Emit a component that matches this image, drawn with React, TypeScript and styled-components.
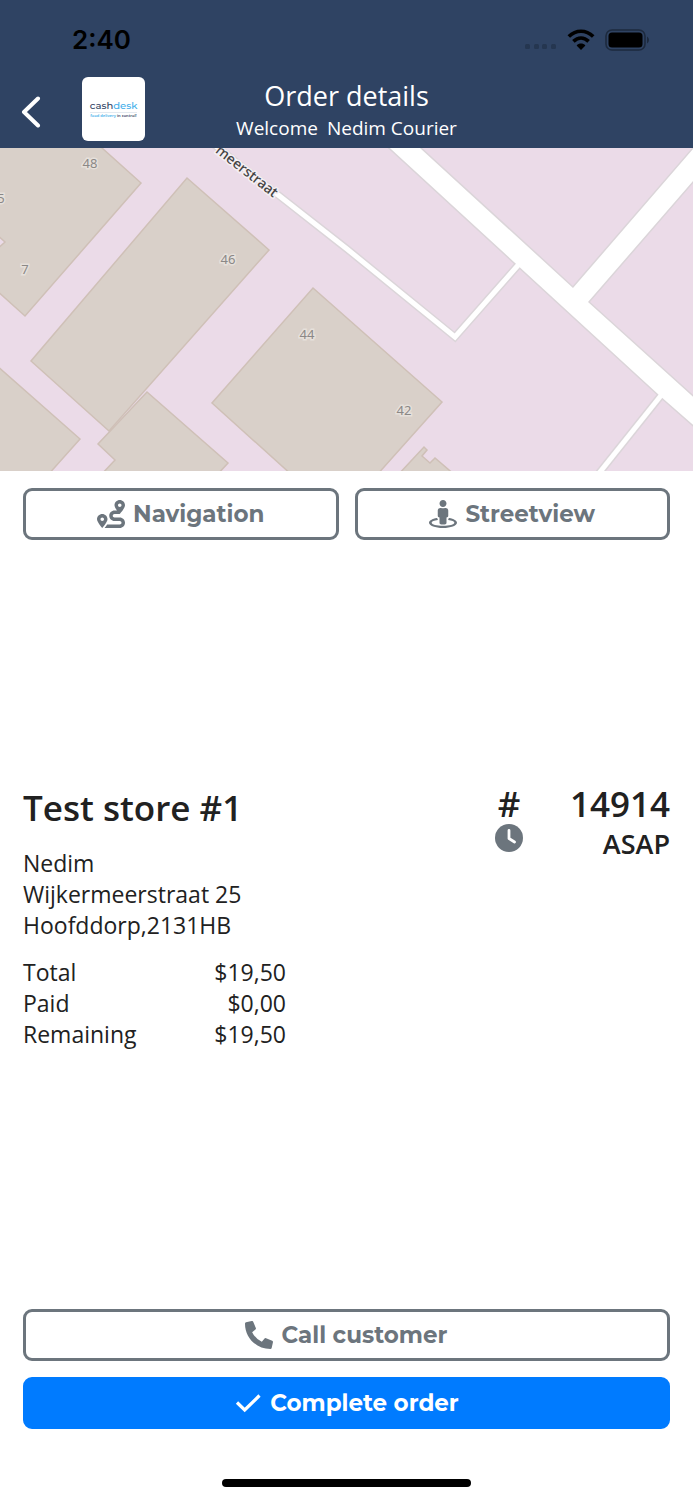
import React from "react";
import styled, { createGlobalStyle } from "styled-components";
import { FaPhoneAlt, FaRoute, FaStreetView } from "react-icons/fa";

const color = {
  navy: "#2f4363",
  gray: "#6c757d",
  blue: "#007bff",
  ink: "#212121",
  land: "#ebdbe8",
  building: "#d9d0c9",
  wall: "#cfc0b7",
  casing: "#dbd5d9",
};

const textFont = `"Open Sans", "Noto Sans", sans-serif`;
const uiFont = `Montserrat, Inter, sans-serif`;

const GlobalStyle = createGlobalStyle`
  *, *::before, *::after { box-sizing: border-box; }
  body {
    margin: 0;
    background: #fff;
    color: ${color.ink};
    font-family: ${textFont};
  }
`;

const Screen = styled.div`
  display: flex;
  flex-direction: column;
  min-height: 100vh;
`;

const Header = styled.header`
  background: ${color.navy};
  color: #fff;
`;

const StatusBar = styled.div`
  display: flex;
  align-items: center;
  justify-content: space-between;
  height: 76px;
  padding: 4px 43px 0 72px;
  color: #000;
`;

const Time = styled.span`
  font: 600 26px/32px Inter, sans-serif;
`;

const StatusIcons = styled.div`
  display: flex;
  align-items: center;
  gap: 10px;
`;

const TitleBar = styled.div`
  display: grid;
  grid-template-columns: 1fr auto 1fr;
  align-items: center;
  height: 72px;
  padding: 0 20px;
`;

const Leading = styled.div`
  display: flex;
  align-items: center;
  gap: 40px;
`;

const BackButton = styled.button`
  display: flex;
  padding: 0;
  border: 0;
  background: none;
  color: inherit;
  cursor: pointer;
`;

const Logo = styled.div`
  display: flex;
  flex-direction: column;
  align-items: center;
  justify-content: center;
  width: 63px;
  height: 64px;
  margin-bottom: 6px;
  border-radius: 6px;
  background: #fff;
`;

const LogoName = styled.span`
  border-bottom: 1px solid #e4eaf0;
  color: ${color.navy};
  font: 500 10px/13px ${uiFont};
`;

const LogoTagline = styled.span`
  color: ${color.navy};
  font: 600 4px/6px "Noto Sans", sans-serif;
  white-space: nowrap;
`;

const Accent = styled.span`
  color: #41aeea;
`;

const Heading = styled.div`
  padding-bottom: 4px;
  text-align: center;
`;

const Title = styled.h1`
  margin: 0;
  font-size: 27px;
  font-weight: 400;
  line-height: 36px;
`;

const Welcome = styled.p`
  display: flex;
  justify-content: center;
  gap: 9px;
  margin: 0;
  font-size: 19px;
  line-height: 28px;
`;

const Map = styled.svg`
  display: block;
  width: 100%;
  height: 323px;
  background: ${color.land};
`;

const HouseNumber = styled.text`
  fill: #8b8886;
  stroke: #e6e0db;
  stroke-width: 3px;
  paint-order: stroke;
  font: 400 13px "Noto Sans", sans-serif;
  text-anchor: middle;
`;

const StreetName = styled.text`
  fill: #444;
  stroke: #f4eef2;
  stroke-width: 3px;
  paint-order: stroke;
  font: 500 14px "Noto Sans", sans-serif;
  text-anchor: middle;
`;

const Actions = styled.div<{ $columns: number }>`
  display: grid;
  grid-template-columns: repeat(${(p) => p.$columns}, 1fr);
  gap: 16px;
  padding: 17px 23px 15px;
`;

const Button = styled.button<{ $primary?: boolean }>`
  display: flex;
  align-items: center;
  justify-content: center;
  gap: 8px;
  height: 52px;
  padding: 0;
  border: 3px solid ${(p) => (p.$primary ? color.blue : color.gray)};
  border-radius: 9px;
  background: ${(p) => (p.$primary ? color.blue : "#fff")};
  color: ${(p) => (p.$primary ? "#fff" : color.gray)};
  font: 700 23px/28px ${uiFont};
  cursor: pointer;
`;

const Details = styled.main`
  display: flex;
  flex: 1;
  align-items: center;
  padding: 0 23px 14px;
`;

const DetailsRow = styled.div`
  display: flex;
  align-items: flex-start;
  justify-content: space-between;
  width: 100%;
`;

const Store = styled.section`
  flex: 0 0 263px;
`;

const StoreName = styled.h2`
  margin: 0 0 16px;
  font-size: 35px;
  font-weight: 600;
  line-height: 48px;
  white-space: nowrap;
`;

const Address = styled.address`
  margin-bottom: 16px;
  font-size: 23px;
  font-style: normal;
  line-height: 31px;
`;

const Totals = styled.table`
  width: 100%;
  border-collapse: collapse;
  font-size: 23px;
  line-height: 31px;

  th, td { padding: 0; font-weight: 400; }
  th { text-align: left; }
  td { text-align: right; }
`;

const Ticket = styled.section`
  display: grid;
  grid-template-columns: 28px 1fr;
  column-gap: 47px;
  justify-items: end;
`;

const TicketNumber = styled.span`
  justify-self: end;
  font-size: 35px;
  font-weight: 600;
  line-height: 40px;
`;

const Hash = styled(TicketNumber)`
  justify-self: center;
`;

const DueTime = styled.span`
  font-size: 27px;
  font-weight: 600;
  line-height: 40px;
`;

const HomeArea = styled.footer`
  display: flex;
  align-items: flex-end;
  justify-content: center;
  height: 56px;
  padding-bottom: 13px;
`;

const HomeIndicator = styled.span`
  width: 36%;
  height: 8px;
  border-radius: 4px;
  background: #000;
`;

const buildings = [
  "M-4-90L102 0L141 35L25 168L-4 142V102L5 94L-4 86Z",
  "M187 30L269 102L109 283L31 213Z",
  "M147 244L228 315L216 328H100L115 312L98 296Z",
  "M-4 217L80 291L47 328H-4Z",
  "M313 140L442 254L376 328H293L212 255Z",
  "M397 328L424 299L427 302L422 308L430 315L435 310L456 328Z",
];

const mainRoads =
  "M379-10L659 247L700 283V255L588 154L700 25V-7L573 140L409-10Z";
const paths = ["M212-5L347 101L455 189L520 115", "M663 245L596 329"];

const houseNumbers: [string, number, number][] = [
  ["48", 90, 20],
  ["5", 1, 55],
  ["7", 25, 126],
  ["46", 228, 116],
  ["44", 307, 191],
  ["42", 404, 267],
];

const StreetMap = () => (
  <Map viewBox="0 0 693 323" preserveAspectRatio="xMidYMid slice" role="img" aria-label="Map of the delivery address">
    <g fill={color.building} stroke={color.wall} strokeWidth="1.5">
      {buildings.map((d) => <path key={d} d={d} />)}
    </g>
    <g fill="none" stroke={color.casing}>
      <path d={mainRoads} strokeWidth="3" />
      {paths.map((d) => <path key={d} d={d} strokeWidth="8" />)}
    </g>
    <path d={mainRoads} fill="#fff" />
    <g fill="none" stroke="#fff" strokeWidth="5">
      {paths.map((d) => <path key={d} d={d} />)}
    </g>
    {houseNumbers.map(([label, x, y]) => (
      <HouseNumber key={label} x={x} y={y}>{label}</HouseNumber>
    ))}
    <StreetName transform="translate(244 27) rotate(38)">meerstraat</StreetName>
  </Map>
);

const SignalIcon = () => (
  <svg width="32" height="22" viewBox="0 0 32 22" fill="#253650" aria-hidden="true">
    {[0, 9, 17, 26].map((x) => <rect key={x} x={x} y="15" width="5" height="5" rx="1.5" />)}
  </svg>
);

const WifiIcon = () => (
  <svg width="28" height="22" viewBox="0 0 28 22" aria-hidden="true">
    <g fill="none" stroke="#000" strokeWidth="3.6">
      <path d="M1.8 7.6C9 .4 19 .4 26.2 7.6" />
      <path d="M6.4 12.4C11 8 17 8 21.6 12.4" />
    </g>
    <path d="M9.6 16.4C12 14 16 14 18.4 16.4L14 21Z" />
  </svg>
);

const BatteryIcon = () => (
  <svg width="45" height="22" viewBox="0 0 45 22" aria-hidden="true">
    <rect x="1" y="1" width="39" height="20" rx="6" fill="none" stroke="#1d2a3e" strokeWidth="1.6" />
    <rect x="3.5" y="3.5" width="34" height="15" rx="3.5" />
    <path d="M42 7.5C44.6 9 44.6 13 42 14.5Z" fill="#1d2a3e" />
  </svg>
);

const ChevronIcon = () => (
  <svg width="22" height="32" viewBox="0 0 22 32" fill="none" stroke="currentColor" strokeWidth="4" strokeLinecap="round" strokeLinejoin="round" aria-hidden="true">
    <path d="M18 2.5L4 16L18 29.5" />
  </svg>
);

const CheckIcon = () => (
  <svg width="28" height="28" viewBox="0 0 28 28" fill="none" stroke="currentColor" strokeWidth="3.2" aria-hidden="true">
    <path d="M3 13.5L10.7 21L25.5 6.5" />
  </svg>
);

const ClockIcon = () => (
  <svg width="28" height="28" viewBox="0 0 28 28" aria-hidden="true">
    <circle cx="14" cy="14" r="14" fill={color.gray} />
    <path d="M14 6.5V14.5L19.5 18" fill="none" stroke="#fff" strokeWidth="2.8" strokeLinecap="round" strokeLinejoin="round" />
  </svg>
);

const amounts = [
  ["Total", "$19,50"],
  ["Paid", "$0,00"],
  ["Remaining", "$19,50"],
];

export default function App() {
  return (
    <Screen>
      <GlobalStyle />
      <Header>
        <StatusBar>
          <Time>2:40</Time>
          <StatusIcons>
            <SignalIcon />
            <WifiIcon />
            <BatteryIcon />
          </StatusIcons>
        </StatusBar>
        <TitleBar>
          <Leading>
            <BackButton aria-label="Back"><ChevronIcon /></BackButton>
            <Logo>
              <LogoName>cash<Accent>desk</Accent></LogoName>
              <LogoTagline><Accent>food delivery</Accent> in control!</LogoTagline>
            </Logo>
          </Leading>
          <Heading>
            <Title>Order details</Title>
            <Welcome><span>Welcome</span><span>Nedim Courier</span></Welcome>
          </Heading>
        </TitleBar>
      </Header>

      <StreetMap />

      <Actions $columns={2}>
        <Button><FaRoute size={28} />Navigation</Button>
        <Button><FaStreetView size={28} />Streetview</Button>
      </Actions>

      <Details>
        <DetailsRow>
          <Store>
            <StoreName>Test store #1</StoreName>
            <Address>
              Nedim<br />
              Wijkermeerstraat 25<br />
              Hoofddorp,2131HB
            </Address>
            <Totals>
              <tbody>
                {amounts.map(([label, value]) => (
                  <tr key={label}>
                    <th scope="row">{label}</th>
                    <td>{value}</td>
                  </tr>
                ))}
              </tbody>
            </Totals>
          </Store>
          <Ticket>
            <Hash>#</Hash>
            <TicketNumber>14914</TicketNumber>
            <ClockIcon />
            <DueTime>ASAP</DueTime>
          </Ticket>
        </DetailsRow>
      </Details>

      <Actions $columns={1}>
        <Button><FaPhoneAlt size={28} />Call customer</Button>
        <Button $primary><CheckIcon />Complete order</Button>
      </Actions>

      <HomeArea>
        <HomeIndicator />
      </HomeArea>
    </Screen>
  );
}
